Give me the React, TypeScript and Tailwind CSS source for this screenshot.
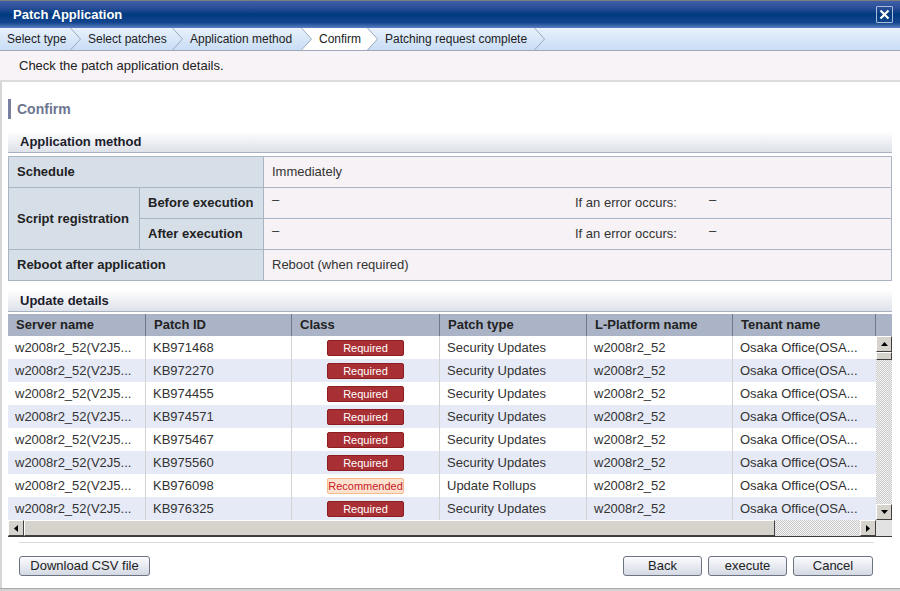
import React from 'react'

const steps = [
  { label: 'Select type', w: 'w-[70px]' },
  { label: 'Select patches', w: 'w-[91px]' },
  { label: 'Application method', w: 'w-[118px]' },
  { label: 'Confirm', w: 'w-[55px]' },
  { label: 'Patching request complete', w: 'w-[156px]' },
]
const activeStep = 3

const rows = [
  { id: 'KB971468', cls: 'Required', type: 'Security Updates' },
  { id: 'KB972270', cls: 'Required', type: 'Security Updates' },
  { id: 'KB974455', cls: 'Required', type: 'Security Updates' },
  { id: 'KB974571', cls: 'Required', type: 'Security Updates' },
  { id: 'KB975467', cls: 'Required', type: 'Security Updates' },
  { id: 'KB975560', cls: 'Required', type: 'Security Updates' },
  { id: 'KB976098', cls: 'Recommended', type: 'Update Rollups' },
  { id: 'KB976325', cls: 'Required', type: 'Security Updates' },
]

const columns = [
  { label: 'Server name', w: 'w-[138px]' },
  { label: 'Patch ID', w: 'w-[146px]' },
  { label: 'Class', w: 'w-[148px]' },
  { label: 'Patch type', w: 'w-[147px]' },
  { label: 'L-Platform name', w: 'w-[146px]' },
  { label: 'Tenant name', w: 'w-[143px]' },
]

function Chevron({ left, right }: { left?: boolean; right?: boolean }) {
  return (
    <svg width="11" height="22" viewBox="0 0 11 22" className="block shrink-0">
      {left && <polygon points="0,0 10.5,11 0,22" fill="#ffffff" />}
      {right && <polygon points="0,0 11,0 11,22 0,22 10.5,11" fill="#ffffff" />}
      <polyline points="0.5,0 10.5,11 0.5,22" fill="none" stroke="#9ba9bd" strokeWidth="1" />
    </svg>
  )
}

function SectionBand({ title }: { title: string }) {
  return (
    <div className="h-[22px] border-b border-[#a9b1c1] bg-[linear-gradient(to_bottom,#ffffff,#dde1e9)] flex items-center pl-[12px]">
      <span className="text-[13px] font-bold text-[#1c1c2c]">{title}</span>
    </div>
  )
}

function Arrow({ dir }: { dir: 'up' | 'down' | 'left' | 'right' }) {
  const pts = {
    up: '0,4 7,4 3.5,0',
    down: '0,0 7,0 3.5,4',
    left: '4,0 4,7 0,3.5',
    right: '0,0 0,7 4,3.5',
  }[dir]
  const vertical = dir === 'up' || dir === 'down'
  return (
    <svg width={vertical ? 7 : 4} height={vertical ? 4 : 7} viewBox={vertical ? '0 0 7 4' : '0 0 4 7'}>
      <polygon points={pts} fill="#000000" />
    </svg>
  )
}

function ScrollBtn({ dir }: { dir: 'up' | 'down' | 'left' | 'right' }) {
  return (
    <div className="w-[16px] h-[16px] shrink-0 bg-[#d6d3cc] border border-t-white border-l-white border-r-[#404040] border-b-[#404040] flex items-center justify-center">
      <Arrow dir={dir} />
    </div>
  )
}

function Badge({ cls }: { cls: string }) {
  if (cls === 'Recommended') {
    return (
      <div className="w-[77px] h-[16px] rounded-[2px] border border-[#f5b98c] bg-[#fde2d0] text-[#c8191e] text-[11px] leading-[14px] text-center">
        Recommended
      </div>
    )
  }
  return (
    <div className="w-[77px] h-[16px] rounded-[2px] border border-[#8c1e22] bg-[#a82f33] text-white text-[11px] leading-[14px] text-center">
      Required
    </div>
  )
}

function Btn({ children, w }: { children: React.ReactNode; w: string }) {
  return (
    <button className={`${w} h-[20px] rounded-[3px] border border-[#6c7382] bg-[linear-gradient(to_bottom,#fbfcfe,#e6e9f0_55%,#d3d8e2)] text-[13px] text-[#222] leading-[18px]`}>
      {children}
    </button>
  )
}

function ScriptValue() {
  return (
    <div className="flex items-center h-full pl-[8px] text-[13px] text-[#333]">
      <span className="w-[303px] -translate-y-[3px]">–</span>
      <span className="w-[134px]">If an error occurs:</span>
      <span className="-translate-y-[3px]">–</span>
    </div>
  )
}

export default function App() {
  const label = 'bg-[#d6dee8] border-r border-b border-[#a9b4c4] flex items-center pl-[8px] text-[13px] font-bold text-[#222]'
  const value = 'bg-[#f6f2f6] border-r border-b border-[#a9b4c4] text-[13px] text-[#333]'

  return (
    <div className="w-[900px] h-[591px] overflow-hidden bg-white flex flex-col font-['Liberation_Sans',Arial,sans-serif] text-[#222]">
      {/* title bar */}
      <div className="h-[28px] shrink-0 border-t border-[#7c7c7c] bg-[linear-gradient(to_bottom,#3d5fa6,#2a4e98_25%,#003a7f_50%,#14458f_80%,#5a7fc2)] flex items-center justify-between pl-[13px] pr-[7px]">
        <span className="text-white text-[13px] font-bold">Patch Application</span>
        <div className="w-[17px] h-[17px] border border-[#a9bcdc] rounded-[1px] flex items-center justify-center">
          <svg width="11" height="11" viewBox="0 0 11 11">
            <path d="M1.5 1.5 L9.5 9.5 M9.5 1.5 L1.5 9.5" stroke="#ffffff" strokeWidth="2.2" />
          </svg>
        </div>
      </div>

      {/* wizard steps */}
      <div className="h-[23px] shrink-0 border-b border-[#9ea8b8] bg-[linear-gradient(to_bottom,#e8f1fc,#c9ddf5)] flex items-stretch">
        {steps.map((s, i) => (
          <React.Fragment key={s.label}>
            <div className={`${s.w} shrink-0 flex items-center pl-[7px] text-[12px] text-[#222] whitespace-nowrap ${i === activeStep ? 'bg-white' : ''}`}>
              {s.label}
            </div>
            <Chevron right={i + 1 === activeStep} left={i === activeStep} />
          </React.Fragment>
        ))}
      </div>

      {/* instructions */}
      <div className="h-[31px] shrink-0 bg-[#f7f3f7] border-b-2 border-[#dcdcdc] flex items-center pl-[19px] text-[13px] text-[#222]">
        Check the patch application details.
      </div>

      {/* content */}
      <div className="flex-1 flex flex-col border-l-2 border-[#d6d6d6] pl-[6px] pr-[8px]">
        <div className="mt-[17px] h-[20px] flex items-center border-l-[3px] border-[#7880a0] pl-[6px]">
          <span className="text-[14px] font-bold text-[#6d7590]">Confirm</span>
        </div>

        <div className="mt-[12px]">
          <SectionBand title="Application method" />
        </div>

        <div className="mt-[3px] grid grid-cols-[131px_124px_1fr] grid-rows-[31px_31px_31px_31px] border-t border-l border-[#a9b4c4]">
          <div className={`${label} col-span-2`}>Schedule</div>
          <div className={`${value} flex items-center pl-[8px]`}>Immediately</div>
          <div className={`${label} row-span-2`}>Script registration</div>
          <div className={label}>Before execution</div>
          <div className={value}><ScriptValue /></div>
          <div className={label}>After execution</div>
          <div className={value}><ScriptValue /></div>
          <div className={`${label} col-span-2`}>Reboot after application</div>
          <div className={`${value} flex items-center pl-[8px]`}>Reboot (when required)</div>
        </div>

        <div className="mt-[9px]">
          <SectionBand title="Update details" />
        </div>

        {/* grid */}
        <div className="mt-[2px] flex flex-col border-b border-[#3a3a3a]">
          <div className="h-[22px] flex bg-[#aab4c6]">
            {columns.map((c) => (
              <div key={c.label} className={`${c.w} shrink-0 border-r border-[#6f7989] flex items-center pl-[8px] text-[13px] font-bold text-[#222]`}>
                {c.label}
              </div>
            ))}
            <div className="flex-1" />
          </div>

          <div className="flex h-[184px]">
            <div className="w-[868px] flex flex-col">
              {rows.map((r, i) => (
                <div key={r.id} className={`h-[23px] flex text-[13px] text-[#333] ${i % 2 ? 'bg-[#e6eaf6]' : 'bg-white'}`}>
                  <div className="w-[138px] shrink-0 border-r border-[#d2d2d2] flex items-center pl-[7px]">w2008r2_52(V2J5...</div>
                  <div className="w-[146px] shrink-0 border-r border-[#d2d2d2] flex items-center pl-[7px]">{r.id}</div>
                  <div className="w-[148px] shrink-0 border-r border-[#d2d2d2] flex items-center justify-center">
                    <Badge cls={r.cls} />
                  </div>
                  <div className="w-[147px] shrink-0 border-r border-[#d2d2d2] flex items-center pl-[7px]">{r.type}</div>
                  <div className="w-[146px] shrink-0 border-r border-[#d2d2d2] flex items-center pl-[7px]">w2008r2_52</div>
                  <div className="w-[143px] shrink-0 flex items-center pl-[7px]">Osaka Office(OSA...</div>
                </div>
              ))}
            </div>
            <div className="w-[16px] flex flex-col">
              <ScrollBtn dir="up" />
              <div className="h-[8px] bg-[#d6d3cc] border border-t-white border-l-white border-r-[#404040] border-b-[#404040]" />
              <div className="flex-1 bg-[image:repeating-conic-gradient(#c9c9c9_0%_25%,#f4f4f4_0%_50%)] bg-[length:2px_2px]" />
              <ScrollBtn dir="down" />
            </div>
          </div>

          <div className="h-[16px] flex">
            <ScrollBtn dir="left" />
            <div className="w-[751px] bg-[#d6d3cc] border border-t-white border-l-white border-r-[#404040] border-b-[#404040]" />
            <div className="flex-1 bg-[image:repeating-conic-gradient(#c9c9c9_0%_25%,#f4f4f4_0%_50%)] bg-[length:2px_2px]" />
            <ScrollBtn dir="right" />
            <div className="w-[16px] bg-[#e2e2e2]" />
          </div>
        </div>

        <div className="mt-[5px] ml-[11px] mr-[18px] h-px bg-[#d6dada]" />

        <div className="mt-[13px] ml-[11px] mr-[19px] flex items-center">
          <Btn w="w-[131px]">Download CSV file</Btn>
          <div className="flex-1" />
          <div className="flex gap-[6px]">
            <Btn w="w-[79px]">Back</Btn>
            <Btn w="w-[79px]">execute</Btn>
            <Btn w="w-[80px]">Cancel</Btn>
          </div>
        </div>
      </div>

      <div className="h-[3px] shrink-0 border-t border-[#a8a8a8] bg-[#d4d4d4]" />
    </div>
  )
}
